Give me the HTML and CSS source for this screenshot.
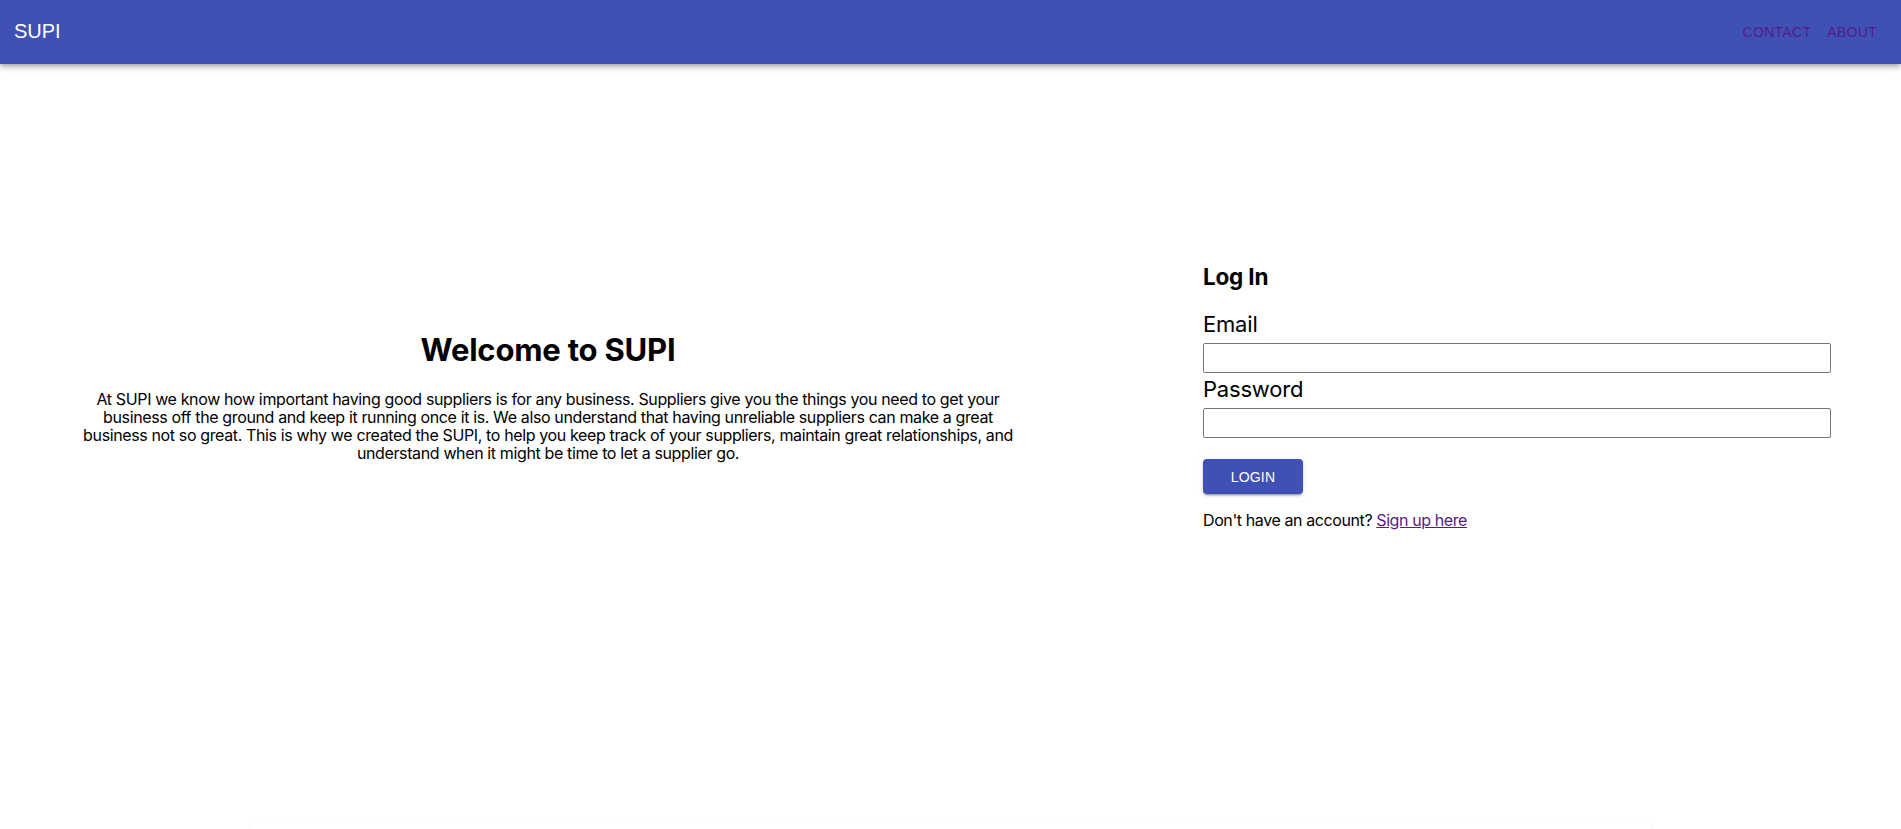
FILE: index.html
```html
<!DOCTYPE html>
<html lang="en">
<head>
<meta charset="utf-8">
<title>SUPI</title>
<link rel="stylesheet" href="styles.css">
</head>
<body>
<header class="appbar">
  <div class="brand">SUPI</div>
  <nav class="nav">
    <a class="nav-link" href="#contact">Contact</a>
    <a class="nav-link" href="#about">About</a>
  </nav>
</header>
<main class="hero">
  <section class="intro">
    <h1 class="intro-title">Welcome to SUPI</h1>
    <p class="intro-text">At SUPI we know how important having good suppliers is for any business. Suppliers give you the things you need to get your business off the ground and keep it running once it is. We also understand that having unreliable suppliers can make a great business not so great. This is why we created the SUPI, to help you keep track of your suppliers, maintain great relationships, and understand when it might be time to let a supplier go.</p>
  </section>
  <section class="login">
    <h3 class="login-title">Log In</h3>
    <form class="login-form">
      <label class="field-label" for="email">Email</label>
      <input class="field-input" id="email" type="email">
      <label class="field-label" for="password">Password</label>
      <input class="field-input" id="password" type="password">
      <button class="login-btn" type="button">Login</button>
    </form>
    <p class="signup">Don't have an account? <a class="signup-link" href="#signup">Sign up here</a></p>
  </section>
</main>
<div class="paper"></div>
</body>
</html>
```

FILE: styles.css
```css
* { box-sizing: border-box; }

html, body {
  margin: 0;
  padding: 0;
  background: #ffffff;
  overflow: hidden;
  height: 829px;
}

body {
  font-family: Inter, "Noto Sans", sans-serif;
  color: #000;
}

.appbar {
  position: relative;
  z-index: 2;
  height: 64px;
  background: #3f51b5;
  display: flex;
  align-items: center;
  justify-content: space-between;
  padding: 0 24px 0 14px;
  box-shadow: 0px 2px 4px -1px rgba(0,0,0,0.2), 0px 4px 5px 0px rgba(0,0,0,0.14), 0px 1px 10px 0px rgba(0,0,0,0.12);
}

.brand {
  font-family: "Liberation Sans", Arial, sans-serif;
  font-size: 20px;
  line-height: 23px;
  color: #ffffff;
  margin-top: -2px;
}

.nav {
  display: flex;
  gap: 16px;
}

.nav-link {
  font-family: "Liberation Sans", Arial, sans-serif;
  font-size: 14px;
  line-height: 16px;
  letter-spacing: 0.3px;
  text-transform: uppercase;
  text-decoration: none;
  color: #551a8b;
}

.hero {
  height: 666px;
  display: flex;
  align-items: center;
}

.intro {
  width: 1096px;
  padding: 0 73px;
  text-align: center;
}

.intro-title {
  font-size: 31px;
  font-weight: 700;
  line-height: 36px;
  letter-spacing: -0.2px;
  margin: 0 0 22px;
}

.intro-text {
  font-size: 16px;
  line-height: 18.2px;
  letter-spacing: -0.37px;
  margin: 0;
}

.login {
  width: 628px;
  margin-left: 107px;
}

.login-title {
  font-size: 22.5px;
  font-weight: 700;
  line-height: 26px;
  letter-spacing: -0.2px;
  margin: 0 0 21px;
}

.login-form {
  display: flex;
  flex-direction: column;
  align-items: flex-start;
}

.field-label {
  font-size: 22px;
  line-height: 26px;
  letter-spacing: -0.2px;
  margin-bottom: 6px;
}

.field-input {
  width: 100%;
  height: 30px;
  border: 1px solid #767676;
  border-radius: 2px;
  margin: 0 0 3px;
  font-size: 16px;
}

.field-input:last-of-type {
  margin-bottom: 21px;
}

.login-btn {
  width: 100px;
  height: 35px;
  border: none;
  border-radius: 4px;
  background: #3f51b5;
  color: #ffffff;
  font-family: "Liberation Sans", Arial, sans-serif;
  font-size: 14px;
  letter-spacing: 0.2px;
  text-transform: uppercase;
  box-shadow: 0px 3px 1px -2px rgba(0,0,0,0.2), 0px 2px 2px 0px rgba(0,0,0,0.14), 0px 1px 5px 0px rgba(0,0,0,0.12);
}

.signup {
  font-size: 16px;
  line-height: 19px;
  letter-spacing: -0.4px;
  margin: 17px 0 0;
}

.signup-link {
  color: #551a8b;
}

.paper {
  width: 1400px;
  height: 40px;
  margin: 94px auto 0;
  background: #fff;
  box-shadow: 0px 2px 1px -1px rgba(0,0,0,0.2), 0px 1px 1px 0px rgba(0,0,0,0.14), 0px 1px 3px 0px rgba(0,0,0,0.12);
  opacity: 0.35;
}
```
